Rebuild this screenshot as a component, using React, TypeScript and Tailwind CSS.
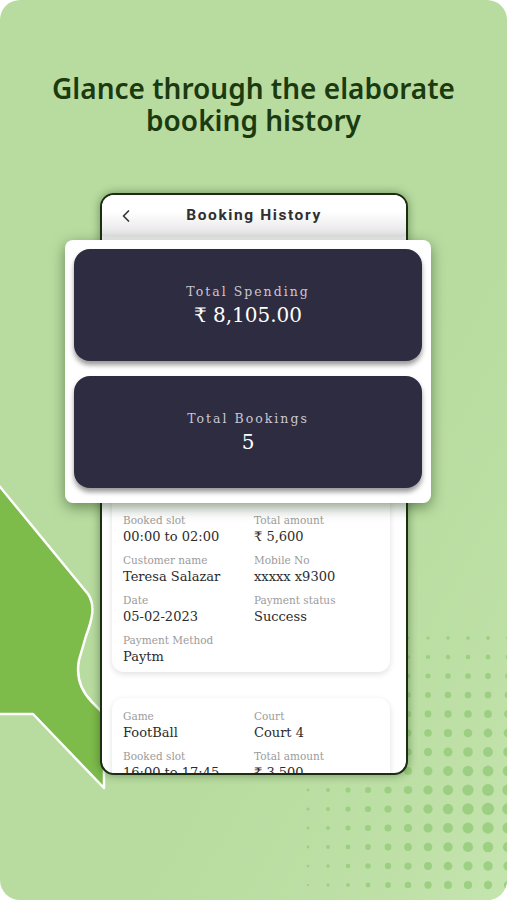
import { ChevronLeft } from "lucide-react";

type Field = { label: string; value: string };

const bookings: Field[][] = [
  [
    { label: "Game", value: "Cricket" },
    { label: "Court", value: "Court 1" },
    { label: "Booked slot", value: "00:00 to 02:00" },
    { label: "Total amount", value: "₹ 5,600" },
    { label: "Customer name", value: "Teresa Salazar" },
    { label: "Mobile No", value: "xxxxx x9300" },
    { label: "Date", value: "05-02-2023" },
    { label: "Payment status", value: "Success" },
    { label: "Payment Method", value: "Paytm" },
  ],
  [
    { label: "Game", value: "FootBall" },
    { label: "Court", value: "Court 4" },
    { label: "Booked slot", value: "16:00 to 17:45" },
    { label: "Total amount", value: "₹ 3,500" },
    { label: "Customer name", value: "Teresa Salazar" },
    { label: "Mobile No", value: "xxxxx x9300" },
  ],
];

// halftone dots bottom right
const Dots = () => {
  const dots = [];
  for (let x = 308; x <= 520; x += 20) {
    for (let y = 638; y <= 890; y += 19) {
      const d = Math.sqrt((x - 490) ** 2 + (y - 805) ** 2);
      const r = 6.3 - d / 38;
      if (r > 0.6) dots.push(<circle key={x + "-" + y} cx={x} cy={y} r={r} fill="#93ca79" opacity={0.8} />);
    }
  }
  return <>{dots}</>;
};

const Backdrop = () => (
  <svg className="absolute inset-0" width="507" height="900" viewBox="0 0 507 900">
    <defs>
      <linearGradient id="bgl" x1="0" y1="0" x2="1" y2="1">
        <stop offset="0.55" stopColor="#b8dca0" stopOpacity="0" />
        <stop offset="1" stopColor="#c6e6b0" stopOpacity="0.9" />
      </linearGradient>
    </defs>
    <rect x="0" y="0" width="507" height="900" fill="url(#bgl)" />
    <path
      d="M-4,482 L88,594 C96,606 92,620 86,636 L79,660 C76,676 80,690 92,702 L104,714 L104,788 L33,714 L-4,714 Z"
      fill="#7dbb4b"
      stroke="#ffffff"
      strokeWidth="2.5"
      strokeLinejoin="round"
    />
    <Dots />
  </svg>
);

const BookingCard = ({ fields }: { fields: Field[] }) => (
  <div className="ml-[10px] mr-[16px] rounded-[12px] bg-white pt-[10px] pb-[6px] px-[11px] shadow-[0_2px_6px_rgba(0,0,0,0.13)]">
    <div className="grid grid-cols-[131px_1fr] gap-y-[6px]">
      {fields.map((f) => (
        <div key={f.label} className="flex flex-col">
          <span className="text-[10.5px] leading-[16px] text-[#9b9b9b]">{f.label}</span>
          <span className="text-[13px] leading-[18px] text-[#2b2b2b]">{f.value}</span>
        </div>
      ))}
    </div>
  </div>
);

const StatCard = ({ title, value }: { title: string; value: string }) => (
  <div className="h-[112px] rounded-[16px] bg-[#2e2c40] flex flex-col items-center justify-center shadow-[0_4px_5px_rgba(0,0,0,0.4)]">
    <div className="text-[12.5px] leading-[18px] tracking-[2px] text-[#c9c8d2]">{title}</div>
    <div className="text-[20px] leading-[26px] text-white mt-[1px]">{value}</div>
  </div>
);

export default function App() {
  return (
    <div className="w-[507px] h-[900px] bg-white">
      <div className="relative w-[507px] h-[900px] rounded-[20px] overflow-hidden bg-[#b8dca0]">
        <Backdrop />
        <div className="relative flex flex-col items-center">
          <h1 className="pt-[72px] text-center text-[28px] leading-[32px] font-semibold text-[#1b3a10] font-['Noto_Sans',sans-serif]">
            Glance through the elaborate
            <br />
            booking history
          </h1>

          <div className="relative mt-[57px] w-[308px] h-[582px] rounded-[14px] border-2 border-[#1c2d13] bg-white shadow-[0_0_10px_rgba(20,50,10,0.45)] ml-[1px]">
            <div className="h-full w-full overflow-hidden rounded-[12px] flex flex-col">
              <div className="relative h-[41px] shrink-0 flex items-center justify-center bg-[linear-gradient(#ffffff_40%,#e4e4e4)] shadow-[0_2px_4px_rgba(0,0,0,0.12)]">
                <ChevronLeft className="absolute left-[14px] text-[#333]" size={20} strokeWidth={2} />
                <span className="text-[15.5px] font-bold tracking-[1.6px] text-[#2f2f2f] font-['Roboto',sans-serif]">Booking History</span>
              </div>
              <div className="flex flex-col gap-[26px] pt-[226px] font-['DejaVu_Serif',serif]">
                {bookings.map((b, i) => (
                  <BookingCard key={i} fields={b} />
                ))}
              </div>
            </div>

            <div className="absolute left-[-37px] top-[45px] w-[366px] rounded-[8px] bg-white p-[9px] pb-[15px] flex flex-col gap-[15px] shadow-[0_4px_14px_rgba(20,50,10,0.5)] font-['DejaVu_Serif',serif]">
              <StatCard title="Total Spending" value="₹ 8,105.00" />
              <StatCard title="Total Bookings" value="5" />
            </div>
          </div>
        </div>
      </div>
    </div>
  );
}
